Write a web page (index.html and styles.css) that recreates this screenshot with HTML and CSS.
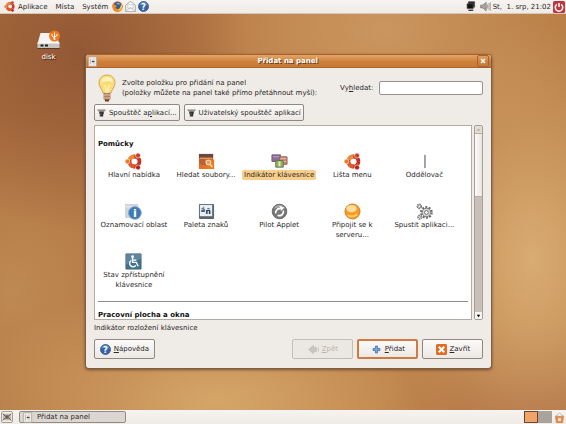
FILE: index.html
```
<!DOCTYPE html>
<html lang="cs">
<head>
    <meta charset="UTF-8">
    <meta name="viewport" content="width=device-width, initial-scale=1.0">
    <title>Přidat na panel</title>
    <link rel="stylesheet" href="styles.css">
</head>
<body>

    <!-- Shared icons -->
    <svg class="sprite" aria-hidden="true">
        <symbol id="ubuntu" viewBox="0 0 18 18">
            <circle cx="10" cy="9" r="5.300" fill="none" stroke="#c8321f" stroke-width="4"/>
            <path d="M5 7.200A5.300 5.300 0 0 1 10 3.700" fill="none" stroke="#ef8a32" stroke-width="4"/>
            <path d="M10 14.300a5.300 5.300 0 0 1-5-3.500" fill="none" stroke="#e0592a" stroke-width="4"/>
            <circle cx="2.600" cy="9" r="2.600" fill="#ec7b2d" stroke="#fff" stroke-width=".6"/>
            <circle cx="13.800" cy="2.700" r="2.600" fill="#c93b2a" stroke="#fff" stroke-width=".6"/>
            <circle cx="13.800" cy="15.300" r="2.600" fill="#b42318" stroke="#fff" stroke-width=".6"/>
        </symbol>
        <symbol id="help" viewBox="0 0 16 16">
            <circle cx="8" cy="8" r="7.3" fill="#3563a5" stroke="#24467c"/>
            <path d="M2 7a6 6 0 0 1 12 0q-6-3-12 0z" fill="#7fa2d2" opacity=".6"/>
            <text x="8" y="12.4" text-anchor="middle" font-size="12" font-weight="bold" fill="#fff">?</text>
        </symbol>
        <symbol id="launcher" viewBox="0 0 16 16">
            <path d="M1 2h14v3l-2 1H3L1 5z" fill="#8b8884"/>
            <path d="M2 3h12" stroke="#dedbd6"/>
            <path d="M4 6h8v4l-1 1v4H5v-4l-1-1z" fill="#33312f"/>
            <path d="M7 8v5" stroke="#8b8884"/>
        </symbol>
        <symbol id="panelapp" viewBox="0 0 16 16">
            <path d="M2 1h12v14H2z" fill="#ecebe7" stroke="#a39c92"/>
            <path d="M5 4v8" stroke="#aaa49c"/>
            <path d="M7 8h4" stroke="#45423e" stroke-width="2"/>
            <path d="M10 4v2M10 10v2" stroke="#bab4ab"/>
        </symbol>
    </svg>

    <header class="panel">
        <nav class="menus">
            <button class="menu"><svg class="icon"><use href="#ubuntu"/></svg>Aplikace</button>
            <button class="menu">Místa</button>
            <button class="menu">Systém</button>
        </nav>
        <div class="launchers">
            <button aria-label="Firefox">
                <svg class="icon" viewBox="0 0 16 16">
                    <circle cx="8" cy="8" r="7.5" fill="#e3691b"/>
                    <circle cx="8" cy="6.6" r="5" fill="#2f5b9e"/>
                    <path d="M6 3l4-.6 2 2-3 1z" fill="#7db4dc"/>
                    <path d="M1 4l2 1 3 1 1 2-2 1 2 3 4-.3 3-3.7-.3-4.5Q17 8 13.600 13 10 16.500 5 15 0 12 1 4z" fill="#ee8b20"/>
                    <path d="M14 4.500q2 5-2 8.500l-4 1 3-3z" fill="#f7cf3d"/>
                </svg>
            </button>
            <button aria-label="Pošta">
                <svg class="icon" viewBox="0 0 16 16">
                    <path d="M1 6l7-5.500L15 6v9.500H1z" fill="#f5f5f1" stroke="#8b8c86"/>
                    <path d="M4 5.500h8v4l-4 2-4-2z" fill="#fff" stroke="#b9c2c4"/>
                    <path d="M1.500 15l5-5h3l5 5" fill="none" stroke="#a7a9a2"/>
                </svg>
            </button>
            <button aria-label="Pomoc"><svg class="icon"><use href="#help"/></svg></button>
        </div>
        <div class="tray">
            <svg class="icon network" viewBox="0 0 16 16">
                <path d="M5 1h9v8H5z" fill="#222" stroke="#555"/>
                <path d="M3 4h9v7H3z" fill="#111" stroke="#555"/>
                <path d="M5 13.500h7" stroke="#333" stroke-width="2"/>
            </svg>
            <svg class="icon" viewBox="0 0 16 16">
                <path d="M1 6h3l5-4v12l-5-4H1z" fill="#aaa7a2" stroke="#6d6a66"/>
                <path d="M11 5v6M13 3v10M15 2v12" stroke="#85827d"/>
            </svg>
            <span>St,&nbsp; 1. srp, 21:02</span>
            <button aria-label="Vypnout">
                <svg class="power" viewBox="0 0 16 16">
                    <rect width="16" height="16" rx="2" fill="#c4323c"/>
                    <path d="M5 4.500a5 5 0 1 0 6 0M8 2.500v5.500" fill="none" stroke="#fff" stroke-width="2"/>
                </svg>
            </button>
        </div>
    </header>

    <main class="desktop">
        <div class="drive">
            <svg class="drive-icon" viewBox="0 0 24 20">
                <path d="M4 3h15l4 11H1z" fill="#f4f3f1"/>
                <path d="M1 13h22v5H1z" fill="#c7c5c2"/>
                <path d="M1 13h22" stroke="#fff"/>
                <path d="M4 15.500h3M8.500 15.500h3" stroke="#222" stroke-width="2"/>
                <path d="M1 18.500h22" stroke="#5a3a26"/>
                <circle cx="18" cy="6" r="5.500" fill="#ee7a1d"/>
                <path d="M18 10V2.500M18 8l-2.500-2V4M18 7l2.500-1.500V4" fill="none" stroke="#fff"/>
                <circle cx="18" cy="9" r="1" fill="#fff"/>
            </svg>
            <span>disk</span>
        </div>

        <section class="window">
            <div class="titlebar">
                <svg class="icon"><use href="#panelapp"/></svg>
                <h1>Přidat na panel</h1>
                <button class="close" aria-label="Zavřít okno">
                    <svg viewBox="0 0 8 8"><path d="M2 2l4 4M6 2l-4 4" stroke="#fff" stroke-width="1.500"/></svg>
                </button>
            </div>

            <div class="content">
                <div class="intro">
                    <svg class="bulb" viewBox="0 0 18 28">
                        <path d="M9 1C4 1 1 4.500 1 9c0 4 3 6 4 10h8c1-4 4-6 4-10 0-4.500-3-8-8-8z" fill="#fbdc75" stroke="#d3a463"/>
                        <path d="M9 3C5 3 3 6 3.500 9c2-2 8-3 11 0C15 5 13 3 9 3z" fill="#fff4bd"/>
                        <path d="M6.500 11l1.500 3v5M11.500 11L10 14v5" fill="none" stroke="#fff8dc"/>
                        <path d="M5.500 19h7v6l-2 2h-3l-2-2z" fill="#b3815f"/>
                        <path d="M5.500 21h7M5.500 24h7" stroke="#e2c3a7"/>
                        <path d="M7 26.500h4" stroke="#624233" stroke-width="2"/>
                    </svg>
                    <p>Zvolte položku pro přidání na panel<br>(položky můžete na panel také přímo přetáhnout myší):</p>
                    <label for="search">Vy<u>h</u>ledat:</label>
                    <input id="search" type="text">
                </div>

                <div class="toolbar">
                    <button class="button"><svg class="icon"><use href="#launcher"/></svg><span>Spouštěč a<u>p</u>likací...</span></button>
                    <button class="button"><svg class="icon"><use href="#launcher"/></svg><span>Uživatelský spouštěč aplikací</span></button>
                </div>

                <div class="browser">
                    <div class="list">
                        <h2>Pomůcky</h2>
                        <div class="items">
                            <button class="item"><svg><use href="#ubuntu"/></svg><span>Hlavní nabídka</span></button>
                            <button class="item">
                                <svg viewBox="0 0 18 18">
                                    <path d="M1 1h15v15H1z" fill="#b96137"/>
                                    <path d="M1 1h15v4H1z" fill="#674a3b"/>
                                    <path d="M2 5.500h13" stroke="#f1b376"/>
                                    <path d="M1 12l6 1 10-1v5H1z" fill="#e27324"/>
                                    <path d="M7 7h10v10h-7z" fill="#ee7a1d"/>
                                    <circle cx="11" cy="10" r="2.500" fill="#e99a5c" stroke="#fff1dd"/>
                                    <path d="M13 12l2 3" stroke="#fff1dd" stroke-width="1.500"/>
                                </svg>
                                <span>Hledat soubory...</span>
                            </button>
                            <button class="item selected">
                                <svg viewBox="0 0 18 18">
                                    <path d="M1 2h9v7H1z" fill="#8b6d9b" stroke="#705a68"/>
                                    <path d="M2 4h7" stroke="#c5a8c7"/>
                                    <path d="M9 4h8v8H9z" fill="#c9857a" stroke="#8f6961"/>
                                    <path d="M10 6h6M10 9h6" stroke="#eebda5"/>
                                    <path d="M5 8h8v7H5z" fill="#98b25c" stroke="#617548"/>
                                    <path d="M9 9v5" stroke="#e3eac5" stroke-width="2"/>
                                </svg>
                                <span>Indikátor klávesnice</span>
                            </button>
                            <button class="item"><svg><use href="#ubuntu"/></svg><span>Lišta menu</span></button>
                            <button class="item">
                                <svg viewBox="0 0 18 18"><path d="M9.500 2v14" stroke="#44413e"/></svg>
                                <span>Oddělovač</span>
                            </button>
                            <button class="item">
                                <svg viewBox="0 0 18 18">
                                    <path d="M0 1h14v15H0z" fill="#cfd5dc"/>
                                    <path d="M0 4h14" stroke="#eceff2"/>
                                    <circle cx="10.500" cy="10.500" r="6.700" fill="#3e79b8" stroke="#7fa5cd"/>
                                    <text x="10.500" y="15" text-anchor="middle" font-size="12" font-weight="bold" fill="#fff">i</text>
                                </svg>
                                <span>Oznamovací oblast</span>
                            </button>
                            <button class="item">
                                <svg viewBox="0 0 18 18">
                                    <rect x="1" y="1" width="16" height="16" rx="1" fill="#5b6570"/>
                                    <path d="M2 2h13v12H2z" fill="#e9eef3"/>
                                    <text x="3" y="9" font-size="7" font-weight="bold" fill="#294c7b">á</text>
                                    <text x="8" y="12" font-size="8" font-weight="bold" fill="#1c2b3c">ñ</text>
                                </svg>
                                <span>Paleta znaků</span>
                            </button>
                            <button class="item">
                                <svg viewBox="0 0 18 18">
                                    <circle cx="9" cy="9" r="7.700" fill="#777" stroke="#666"/>
                                    <path d="M3 6a6.500 6.500 0 0 1 12 0q-6-2-12 0z" fill="#aaa"/>
                                    <path d="M5 11a4.300 4.300 0 0 1 5-5M13 8a4.300 4.300 0 0 1-6 5" fill="none" stroke="#fff" stroke-width="1.800"/>
                                    <path d="M9 3l5 2-3.500 3.500z" fill="#fff"/>
                                </svg>
                                <span>Pilot Applet</span>
                            </button>
                            <button class="item">
                                <svg viewBox="0 0 18 18">
                                    <circle cx="9" cy="9" r="8" fill="#f39a27" stroke="#d67d24"/>
                                    <ellipse cx="8" cy="6" rx="5.500" ry="4" fill="#fddc9c"/>
                                    <path d="M4 13q5 3 10-1" fill="none" stroke="#ffd05b" stroke-width="2"/>
                                </svg>
                                <span>Připojit se k serveru...</span>
                            </button>
                            <button class="item">
                                <svg viewBox="0 0 18 18">
                                    <circle cx="11" cy="10" r="5.500" fill="none" stroke="#6b6b6b" stroke-width="2.500" stroke-dasharray="2 1.450"/>
                                    <circle cx="11" cy="10" r="4.500" fill="#d8d8d8" stroke="#777"/>
                                    <circle cx="11" cy="10" r="2" fill="#fff" stroke="#666"/>
                                    <circle cx="3.500" cy="3.500" r="2" fill="#eee" stroke="#777" stroke-width="2" stroke-dasharray="1.500 .6"/>
                                    <circle cx="4" cy="15" r="1.800" fill="#eee" stroke="#888" stroke-width="2" stroke-dasharray="1.500 .6"/>
                                </svg>
                                <span>Spustit aplikaci...</span>
                            </button>
                            <button class="item">
                                <svg viewBox="0 0 18 18">
                                    <path d="M1 1h16v16H1z" fill="#417493" stroke="#466476"/>
                                    <path d="M1 1h16v5L1 12z" fill="#7193a7" opacity=".6"/>
                                    <circle cx="8" cy="4" r="1.500" fill="#fff"/>
                                    <path d="M8 5v5h4l2 4M8 7.500h4M6.500 8a3.600 3.600 0 1 0 5 5" fill="none" stroke="#fff" stroke-width="1.400"/>
                                </svg>
                                <span>Stav zpřístupnění klávesnice</span>
                            </button>
                        </div>
                        <hr>
                        <h2>Pracovní plocha a okna</h2>
                    </div>
                    <div class="scrollbar">
                        <button class="arrow" aria-label="Nahoru" disabled><svg viewBox="0 0 8 8"><path d="M2 5l2-2 2 2z"/></svg></button>
                        <div class="track"><div class="thumb"></div></div>
                        <button class="arrow" aria-label="Dolů"><svg viewBox="0 0 8 8"><path d="M2 3h4L4 6z"/></svg></button>
                    </div>
                </div>
                <p class="status">Indikátor rozložení klávesnice</p>

                <div class="actions">
                    <button class="button"><svg class="icon"><use href="#help"/></svg><span><u>N</u>ápověda</span></button>
                    <button class="button back" disabled>
                        <svg class="icon" viewBox="0 0 16 16"><path d="M1 8l7-6v3h3v6H8v3zM12.500 5v6M15 5v6" fill="#c9c5c0" stroke="#bbb6b0"/></svg>
                        <span><u>Z</u>pět</span>
                    </button>
                    <button class="button default">
                        <svg class="icon" viewBox="0 0 16 16"><path d="M6.500 3h3v3.500H13v3H9.500V13h-3V9.500H3v-3h3.500z" fill="#7ca5d4" stroke="#3465a4"/></svg>
                        <span><u>P</u>řidat</span>
                    </button>
                    <button class="button">
                        <svg class="icon" viewBox="0 0 16 16">
                            <rect width="16" height="16" rx="2" fill="#e56b22"/>
                            <path d="M4 4l8 8M12 4l-8 8" stroke="#fff" stroke-width="3"/>
                        </svg>
                        <span><u>Z</u>avřít</span>
                    </button>
                </div>
            </div>
        </section>
    </main>

    <footer class="panel bottom">
        <button class="show-desktop" aria-label="Zobrazit plochu">
            <svg viewBox="0 0 12 12">
                <path d="M1 2h10v8H1z" fill="#c3b9ae"/>
                <path d="M1 2l3 3M11 2L8 5M1 10l3-3M11 10L8 7" stroke="#4b443f"/>
                <path d="M4 4h4v4H4z" fill="#685b50"/>
            </svg>
        </button>
        <button class="task"><svg class="icon"><use href="#panelapp"/></svg>Přidat na panel</button>
        <div class="workspaces">
            <button class="workspace current" aria-label="Plocha 1"></button>
            <button class="workspace" aria-label="Plocha 2"></button>
        </div>
        <button class="trash" aria-label="Koš">
            <svg class="icon" viewBox="0 0 16 16">
                <path d="M3 6q5-8 10 0" fill="#fff" stroke="#aaa49d"/>
                <path d="M2 6h12l-1.500 10h-9z" fill="#e98d48" stroke="#b98460"/>
                <path d="M6 9h4v4H6z" fill="#fff0e0"/>
            </svg>
        </button>
    </footer>

</body>
</html>
```
FILE: styles.css
```
/* Basic reset */
* {
    margin: 0;
    padding: 0;
    box-sizing: border-box;
}

body {
    display: flex;
    flex-direction: column;
    height: 100vh;
    overflow: hidden;
    font-family: "DejaVu Sans", sans-serif;
    font-size: 7px;
    line-height: 10px;
    color: #2c2826;
}

button,
input {
    font: inherit;
    color: inherit;
    background: none;
    border: none;
}

svg {
    display: block;
    flex: none;
}

u {
    text-underline-offset: 1px;
}

.sprite {
    display: none;
}

.icon {
    width: 11px;
    height: 11px;
}

/* Panels at the top and bottom of the screen */
.panel {
    display: flex;
    align-items: center;
    flex: none;
    height: 14px;
    padding: 0 1px 0 4px;
    background: linear-gradient(#f6f3f0, #efebe7);
    border-bottom: 1px solid #d9c8b9;
}

.menus {
    display: flex;
    gap: 8px;
}

.menu {
    display: flex;
    align-items: center;
    gap: 3px;
}

.launchers {
    display: flex;
    gap: 2px;
    margin-left: 4px;
}

.tray {
    display: flex;
    align-items: center;
    gap: 2px;
    margin-left: auto;
}

.network {
    margin-right: 2px;
}

.power {
    width: 12px;
    height: 12px;
}

/* Desktop with the wallpaper */
.desktop {
    position: relative;
    flex: 1;
    background:
        radial-gradient(ellipse 30% 45% at 14% 10%, rgba(139, 80, 50, 0.8), transparent),
        radial-gradient(ellipse 25% 60% at 94% 62%, rgba(220, 177, 120, 0.9), transparent),
        radial-gradient(ellipse 45% 30% at 38% 98%, rgba(216, 170, 108, 0.9), transparent),
        radial-gradient(ellipse 30% 25% at 96% 102%, rgba(164, 95, 56, 0.8), transparent),
        radial-gradient(ellipse 25% 45% at 2% 70%, rgba(197, 147, 91, 0.7), transparent),
        radial-gradient(ellipse 35% 35% at 68% 4%, rgba(206, 155, 101, 0.8), transparent),
        linear-gradient(100deg, #ac6f3e, #bd8049 50%, #b67c43);
}

.drive {
    position: absolute;
    left: 36px;
    top: 16px;
    display: flex;
    flex-direction: column;
    align-items: center;
    gap: 2px;
    color: #fff;
    text-shadow: 1px 1px 1px #40200f;
}

.drive-icon {
    width: 25px;
    height: 20px;
}

/* Dialog window */
.window {
    position: absolute;
    left: 15%;
    right: 13%;
    top: 40px;
    background: #efebe7;
    border: 1px solid #7b6049;
    border-top-color: #a9622d;
    border-radius: 4px;
    box-shadow: 0 1px 3px rgba(70, 35, 10, 0.6);
}

.titlebar {
    display: flex;
    align-items: center;
    height: 13px;
    padding: 0 2px 0 1px;
    color: #fff;
    background: linear-gradient(#e2a566, #cd7e38 60%, #c77a39);
    border-bottom: 1px solid #a9622d;
    border-radius: 3px 3px 0 0;
}

.titlebar h1 {
    flex: 1;
    font-size: 7px;
    text-align: center;
    text-shadow: 1px 1px 0 #70401c;
}

.close {
    padding: 1px;
    border: 1px solid #a5642f;
    border-radius: 2px;
}

.close svg {
    width: 8px;
    height: 8px;
}

.content {
    padding: 4px 8px 9px;
}

.intro {
    display: flex;
    align-items: center;
    gap: 6px;
    height: 32px;
    padding-left: 4px;
}

.intro p {
    flex: 1;
    white-space: nowrap;
}

.bulb {
    width: 18px;
    height: 28px;
}

.intro input {
    width: 27%;
    height: 14px;
    padding: 0 3px;
    background: #fff;
    border: 1px solid #9b9089;
    border-radius: 2px;
}

.toolbar {
    display: flex;
    gap: 4px;
    margin-bottom: 4px;
}

.button {
    display: flex;
    align-items: center;
    justify-content: center;
    gap: 3px;
    height: 17px;
    padding: 0 2px;
    background: linear-gradient(#fbfaf9, #ece8e4);
    border: 1px solid #92877f;
    border-radius: 2px;
    white-space: nowrap;
}

.toolbar .icon {
    width: 9px;
    height: 9px;
}

/* Applet list */
.browser {
    display: flex;
    gap: 2px;
    height: 195px;
}

.list {
    flex: 1;
    overflow: hidden;
    padding: 13px 3px 0;
    background: #fff;
    border: 1px solid #b5aaa2;
}

.list h2 {
    font-size: 7px;
    color: #111;
}

.items {
    display: grid;
    grid-template-columns: repeat(5, 1fr);
    grid-auto-rows: 50px;
    padding: 4px 8px 0 0;
}

.item {
    display: flex;
    flex-direction: column;
    align-items: center;
    line-height: 10px;
}

.item svg {
    width: 17px;
    height: 17px;
}

.item span {
    padding: 0 2px;
    border-radius: 2px;
}

.selected span {
    background: #f9cf8b;
    white-space: nowrap;
}

hr {
    margin-top: -2px;
    margin-bottom: 8px;
    border: none;
    border-top: 1px solid #8f8b88;
}

.scrollbar {
    display: flex;
    flex-direction: column;
    width: 9px;
    background: #c8bfb8;
    border: 1px solid #a89e96;
    border-radius: 2px;
}

.arrow {
    background: #f7f5f3;
}

.arrow svg {
    width: 7px;
    height: 7px;
}

.arrow:disabled {
    background: #e2ddd9;
}

.arrow:disabled path {
    fill: #a89e96;
}

.track {
    flex: 1;
}

.thumb {
    height: 36%;
    background: linear-gradient(90deg, #fbfaf9, #e9e5e1);
    border: 1px solid #b8aea6;
    border-width: 1px 0;
}

.status {
    margin: 3px 0 6px;
}

.actions {
    display: flex;
    gap: 4px;
}

.actions .button {
    flex: 0 1 61px;
    height: 20px;
}

.actions .back {
    margin-left: auto;
}

.button:disabled {
    color: #bcb6b0;
    background: #ebe7e3;
    border-color: #c5beb8;
}

.default {
    border: 2px solid #cc7c42;
}

/* Window list */
.bottom {
    gap: 6px;
    padding: 0 1px;
    border-bottom: none;
}

.show-desktop {
    border: 1px solid #a89e96;
    border-radius: 2px;
}

.show-desktop svg {
    width: 10px;
    height: 10px;
}

.task {
    display: flex;
    align-items: center;
    gap: 4px;
    flex: 0 1 107px;
    height: 12px;
    padding: 0 2px;
    background: #dbd6d1;
    border: 1px solid #968b83;
    border-radius: 2px;
}

.workspaces {
    display: flex;
    margin-left: auto;
}

.workspace {
    width: 14px;
    height: 12px;
    background: #aaa39c;
}

.current {
    background: #f0a468;
    border: 1px solid #70452a;
}

.trash {
    margin-left: -4px;
}
```
